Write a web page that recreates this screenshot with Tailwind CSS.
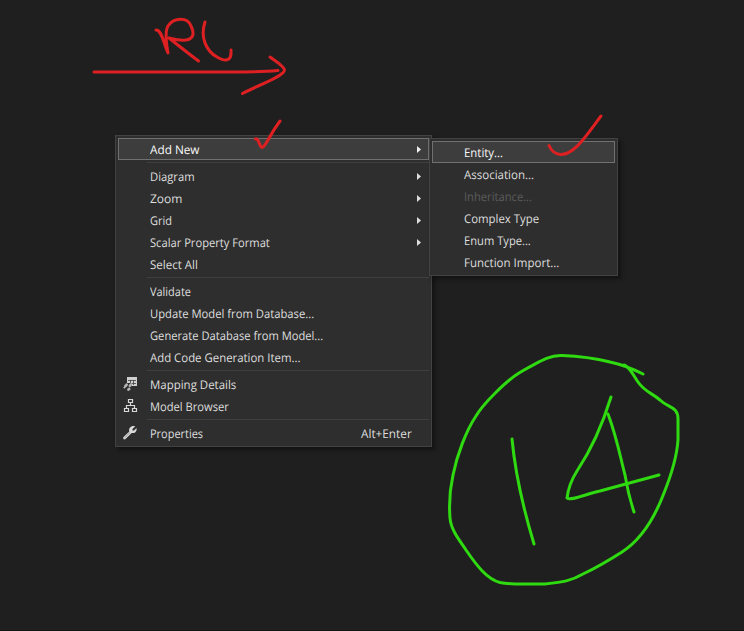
<!DOCTYPE html>
<html lang="en">
<head>
<meta charset="utf-8">
<title>Context menu</title>
<script src="https://cdn.jsdelivr.net/npm/@tailwindcss/browser@4"></script>
</head>
<body class="relative h-[631px] w-[744px] overflow-hidden bg-[#1f1f1f] font-['Open_Sans','Noto_Sans',sans-serif] text-[12px] text-[#dedede] [text-rendering:geometricPrecision] [&_span]:inline-block [&_span]:origin-left [&_span]:whitespace-nowrap [&_span]:pt-[2px]">

<nav class="absolute left-[115px] top-[135px] flex h-[312px] w-[317px] flex-col border border-[#424242] bg-[#2e2e2e] p-[2px] shadow-[3px_3px_4px_rgba(0,0,0,0.4)]">
  <div class="flex h-[22px] items-center justify-between border border-[#707070] bg-[#3d3d3d] pl-[31px] pr-[7px] text-[#fafafa]"><span data-w="49">Add New</span><svg class="h-[7px] w-1" viewBox="0 0 4 7"><path d="M0 0L4 3.5L0 7Z" fill="#f0f0f0"/></svg></div>
  <div class="ml-[29px] flex h-[5px] items-center"><hr class="w-full border-[#3f3f3f]"></div>
  <div class="flex h-[22px] items-center justify-between pl-8 pr-2"><span data-w="45">Diagram</span><svg class="h-[7px] w-1" viewBox="0 0 4 7"><path d="M0 0L4 3.5L0 7Z" fill="#dedede"/></svg></div>
  <div class="flex h-[22px] items-center justify-between pl-8 pr-2"><span data-w="32">Zoom</span><svg class="h-[7px] w-1" viewBox="0 0 4 7"><path d="M0 0L4 3.5L0 7Z" fill="#dedede"/></svg></div>
  <div class="flex h-[22px] items-center justify-between pl-8 pr-2"><span data-w="22">Grid</span><svg class="h-[7px] w-1" viewBox="0 0 4 7"><path d="M0 0L4 3.5L0 7Z" fill="#dedede"/></svg></div>
  <div class="flex h-[22px] items-center justify-between pl-8 pr-2"><span data-w="120">Scalar Property Format</span><svg class="h-[7px] w-1" viewBox="0 0 4 7"><path d="M0 0L4 3.5L0 7Z" fill="#dedede"/></svg></div>
  <div class="flex h-[22px] items-center pl-8"><span data-w="48">Select All</span></div>
  <div class="ml-[29px] flex h-[5px] items-center"><hr class="w-full border-[#3f3f3f]"></div>
  <div class="flex h-[22px] items-center pl-8"><span data-w="41">Validate</span></div>
  <div class="flex h-[22px] items-center pl-8"><span data-w="164">Update Model from Database...</span></div>
  <div class="flex h-[22px] items-center pl-8"><span data-w="173">Generate Database from Model...</span></div>
  <div class="flex h-[22px] items-center pl-8"><span data-w="150">Add Code Generation Item...</span></div>
  <div class="ml-[29px] flex h-[5px] items-center"><hr class="w-full border-[#3f3f3f]"></div>
  <div class="flex h-[22px] items-center gap-[11px] pl-[5px]"><svg class="h-4 w-4" viewBox="0 0 16 16"><path d="M4 1H14V10H9V7H4Z" fill="#cfcfcf"/><path d="M5 4.500H13M7.500 4V7M10.500 4V9M9 7.500H13" stroke="#2e2e2e" stroke-width=".7"/><path d="M2.500 10L3.700 8.700M6.800 9.800L8.200 8.400M5.400 13.600L6.200 12.900" stroke="#b5b5b5" stroke-width="2.600" stroke-linecap="round"/><path d="M.8 12.300L3 9.500" stroke="#b5b5b5" stroke-width="1.500"/></svg><span data-w="86">Mapping Details</span></div>
  <div class="flex h-[22px] items-center gap-[11px] pl-[5px]"><svg class="h-4 w-4" viewBox="0 0 16 16" fill="none" stroke="#d8d8d8" stroke-width="1.200"><path d="M5.500 1.500H9.500V4.500H5.500ZM1.500 10.500H5.500V13.500H1.500ZM9.500 10.500H13.500V13.500H9.500ZM7.500 4.500V7.500M3.500 10V7.500H11.500V10"/></svg><span data-w="79">Model Browser</span></div>
  <div class="ml-[29px] flex h-[5px] items-center"><hr class="w-full border-[#3f3f3f]"></div>
  <div class="flex h-[22px] items-center gap-3 pl-1 pr-[17px]"><svg class="h-4 w-4" viewBox="0 0 16 16"><path d="M13.200 1.300L10.500 4V5.500H12L14.500 3C15.200 6.200 13 8.700 9.700 7.900L3.500 14C2.300 15.200 .2 13.300 1.500 12L7.300 6.500C6.100 3 9.500 .1 13.200 1.300Z" fill="#dadada"/><path d="M2.500 12.900L8 7.500" stroke="#777" stroke-width=".7"/></svg><span data-w="53">Properties</span><span class="ml-auto !origin-right" data-w="51">Alt+Enter</span></div>
</nav>

<nav class="absolute left-[429px] top-[138px] flex h-[138px] w-[189px] flex-col border border-[#424242] bg-[#2e2e2e] p-[2px] shadow-[3px_3px_4px_rgba(0,0,0,0.4)]">
  <div class="flex h-[22px] items-center border border-[#707070] bg-[#3d3d3d] pl-[31px] text-[#fafafa]"><span data-w="39">Entity...</span></div>
  <div class="flex h-[22px] items-center pl-8"><span data-w="70">Association...</span></div>
  <div class="flex h-[22px] items-center pl-8 text-[#5c5c5c]"><span data-w="68">Inheritance...</span></div>
  <div class="flex h-[22px] items-center pl-8"><span data-w="75">Complex Type</span></div>
  <div class="flex h-[22px] items-center pl-8"><span data-w="67">Enum Type...</span></div>
  <div class="flex h-[22px] items-center pl-8"><span data-w="95">Function Import...</span></div>
</nav>

<!-- Pen annotations -->
<svg class="pointer-events-none absolute inset-0 h-[631px] w-[744px]" viewBox="0 0 744 631" fill="none" stroke-linecap="round" stroke-linejoin="round">
  <g stroke="#df2022" stroke-width="3">
    <path d="M94 72H230C250 72 266 71.500 278 70.500"/>
    <path d="M270 57C277 62 284 66 284.500 70C284 76 265 82 242.500 93.500"/>
    <path d="M156 30C162 30 163 42 168 53C166 42 165 31 168 26C174 17 188 17 191 26C195 34 193 39 186 40C180 41 173 39 169 38C179 46 189 54 198.500 61"/>
    <path d="M205 22C200 37 206 51 217 57C224 61 232 63 231 50"/>
    <path d="M255.500 139C259 137.500 259 147 262 147.500C266 147 268 137 280 121"/>
    <path d="M549 145.500C551 150 555 154.500 561 154.500C575 154 586 136 601 116"/>
  </g>
  <g stroke="#2fdb10" stroke-width="3">
    <path d="M643 374C633 369 624 365 610 362C594 358 575 356 562 355.500C552 355 545 358 519 373C506 381 483 404 476 416C466 431 457 455 453 475C449 493 449 505 450 518C451 531 461 542 466 550C477 566 487 579 500 582.500C508 584 515 584 523 584H545C563 582 571 581 583 574C598 567 611 559 622 552C639 541 653 522 664 493C672 473 677 455 678 440V419C678 406 668 408 660 400C652 393 645 392 638 382C633 375 630 367 624 365"/>
    <path d="M512 439C515 471 521 501 534 544"/>
    <path d="M611 397C603 423 591 450 577 471C570 482 568 490 567 498C570 501 583 495 600 491L659 475"/>
    <path d="M608 414C617 438 620 456 625 475C628 493 630 500 634 512"/>
  </g>
</svg>
<div class="absolute bottom-0 left-0 h-px w-full bg-[#141414]"></div>

<script>
  function fitLabels() {
    document.querySelectorAll('[data-w]').forEach(function (el) {
      el.style.transform = 'scaleX(' + Number(el.dataset.w) / el.offsetWidth + ')';
    });
  }
  fitLabels();
  window.addEventListener('load', fitLabels);
  document.fonts.ready.then(fitLabels);
  new ResizeObserver(fitLabels).observe(document.querySelector('[data-w="173"]'));
</script>
</body>
</html>
